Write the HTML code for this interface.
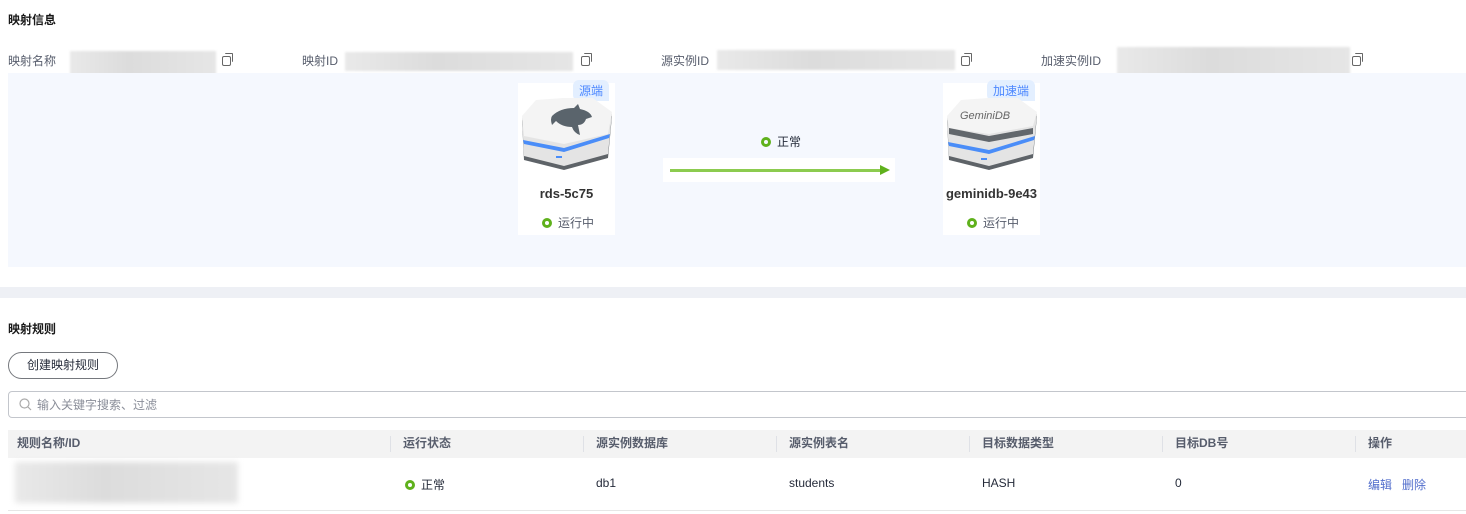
<!DOCTYPE html>
<html><head><meta charset="utf-8"><style>
*{margin:0;padding:0;box-sizing:border-box}
body{width:1466px;height:514px;background:#fff;font-family:"Liberation Sans","Noto Sans CJK SC",sans-serif;font-size:12px;color:#252b3a;position:relative;overflow:hidden}
.a{position:absolute;white-space:nowrap}
.b{font-weight:bold;color:#191919}
.blur{position:absolute;background:linear-gradient(90deg,#e9e9e9,#dcdcdc 40%,#e6e6e6);filter:blur(1px)}
.cp{position:absolute;width:9px;height:10px;border:1.3px solid #666;border-radius:2px}
.cp:after{content:"";position:absolute;left:2px;top:-4px;width:7px;height:8px;border-top:1.3px solid #666;border-right:1.3px solid #666;border-radius:1px}
.dot{display:inline-block;width:10px;height:10px;border:3px solid #5fb11c;border-radius:50%;vertical-align:-1px;margin-right:6px}
.tag{position:absolute;background:#e3efff;color:#4d88ff;font-size:12px;padding:2px 6px;border-radius:6px 6px 0 6px}
.th{position:absolute;top:429px;height:28px;line-height:28px;color:#575d6c;font-weight:bold}
.sep{position:absolute;top:436px;width:1px;height:16px;background:#dfe1e6}
.td{position:absolute;top:476px;color:#252b3a}
</style></head><body>
<div class="a b" style="left:8px;top:11px">映射信息</div>
<div class="a" style="left:8px;top:52px;color:#575d6c">映射名称</div>
<div class="blur" style="left:70px;top:51px;width:146px;height:26px"></div>
<div class="cp" style="left:222px;top:56px"></div>
<div class="a" style="left:302px;top:52px;color:#575d6c">映射ID</div>
<div class="blur" style="left:345px;top:52px;width:228px;height:19px"></div>
<div class="cp" style="left:581px;top:56px"></div>
<div class="a" style="left:661px;top:52px;color:#575d6c">源实例ID</div>
<div class="blur" style="left:717px;top:50px;width:238px;height:20px"></div>
<div class="cp" style="left:961px;top:56px"></div>
<div class="a" style="left:1041px;top:52px;color:#575d6c">加速实例ID</div>
<div class="blur" style="left:1117px;top:47px;width:233px;height:30px"></div>
<div class="cp" style="left:1352px;top:56px"></div>

<div class="a" style="left:8px;top:73px;width:1458px;height:194px;background:#f5f8fe"></div>

<div class="a" style="left:518px;top:83px;width:97px;height:152px;background:#fff"></div>
<div class="tag" style="left:573px;top:80px">源端</div>
<svg class="a" style="left:520px;top:98px" width="92" height="72" viewBox="0 0 92 72">
<polygon points="16,6 70,2 92,18 88,60 44,72 4,62 2,22" fill="#5e6368"/>
<polygon points="16,4 70,0 92,16 88,56 44,68 4,58 2,20" fill="#e4e4e4"/>
<polygon points="16,2 70,-2 92,14 88,36 44,46 4,38 2,18" fill="#f4f4f4"/>
<polygon points="3,42 44,50 90,36 89,40 44,54 4,46" fill="#4a8df8"/>
<rect x="36" y="58" width="6" height="2" fill="#4a8df8"/>
<path d="M32 18 q8-8 22-8 l4-4 2 5 q10 2 12 8 l-6 2 q-2 6-8 6 l2 10 q-6-2-8-8 q-10 0-16-6 l-4 4 q-2-6 0-9z" fill="#5a646c"/>
</svg>
<div class="a b" style="left:518px;top:186px;width:97px;text-align:center;font-size:13px;color:#333">rds-5c75</div>
<div class="a" style="left:542px;top:214px;color:#575d6c"><span class="dot"></span>运行中</div>

<div class="a" style="left:761px;top:133px"><span class="dot"></span>正常</div>
<div class="a" style="left:663px;top:158px;width:232px;height:24px;background:#fff"></div>
<div class="a" style="left:670px;top:169px;width:212px;height:3px;background:#8ccb4f"></div>
<div class="a" style="left:880px;top:165px;width:0;height:0;border-left:10px solid #5fb11c;border-top:5px solid transparent;border-bottom:5px solid transparent"></div>

<div class="a" style="left:943px;top:83px;width:97px;height:152px;background:#fff"></div>
<div class="tag" style="left:987px;top:80px">加速端</div>
<svg class="a" style="left:945px;top:98px" width="92" height="72" viewBox="0 0 92 72">
<polygon points="16,6 70,2 92,18 88,60 44,72 4,62 2,22" fill="#5e6368"/>
<polygon points="16,4 70,0 92,16 88,56 44,68 4,58 2,20" fill="#e4e4e4"/>
<polygon points="16,2 70,-2 92,14 88,28 44,36 4,30 2,18" fill="#f4f4f4"/>
<polygon points="4,30 44,38 88,30 88,36 44,44 4,36" fill="#62676c"/>
<polygon points="3,44 44,52 90,38 89,42 44,56 4,48" fill="#4a8df8"/>
<rect x="36" y="60" width="6" height="2" fill="#4a8df8"/>
<text x="15" y="21" font-size="11" font-style="italic" fill="#666" font-family="Liberation Sans">GeminiDB</text>
</svg>
<div class="a b" style="left:943px;top:186px;width:97px;text-align:center;font-size:13px;color:#333">geminidb-9e43</div>
<div class="a" style="left:967px;top:214px;color:#575d6c"><span class="dot"></span>运行中</div>

<div class="a" style="left:0;top:287px;width:1466px;height:11px;background:#eef0f5"></div>

<div class="a b" style="left:8px;top:320px">映射规则</div>
<div class="a" style="left:8px;top:352px;width:110px;height:27px;border:1px solid #75787d;border-radius:14px;text-align:center;line-height:25px;color:#252b3a">创建映射规则</div>
<div class="a" style="left:8px;top:391px;width:1470px;height:27px;border:1px solid #c3c6cc;border-radius:4px"></div>
<svg class="a" style="left:19px;top:398px" width="13" height="13"><circle cx="5.5" cy="5.5" r="4.5" fill="none" stroke="#aaa" stroke-width="1.2"/><line x1="9" y1="9" x2="12" y2="12" stroke="#aaa" stroke-width="1.2"/></svg>
<div class="a" style="left:37px;top:396px;color:#8a8e99">输入关键字搜索、过滤</div>

<div class="a" style="left:8px;top:430px;width:1458px;height:28px;background:#f3f3f3"></div>
<div class="th" style="left:17px">规则名称/ID</div>
<div class="sep" style="left:390px"></div><div class="th" style="left:403px">运行状态</div>
<div class="sep" style="left:583px"></div><div class="th" style="left:596px">源实例数据库</div>
<div class="sep" style="left:776px"></div><div class="th" style="left:789px">源实例表名</div>
<div class="sep" style="left:969px"></div><div class="th" style="left:982px">目标数据类型</div>
<div class="sep" style="left:1162px"></div><div class="th" style="left:1175px">目标DB号</div>
<div class="sep" style="left:1355px"></div><div class="th" style="left:1368px">操作</div>

<div class="blur" style="left:15px;top:462px;width:223px;height:41px;filter:blur(3px)"></div>
<div class="td" style="left:405px"><span class="dot"></span>正常</div>
<div class="td" style="left:596px">db1</div>
<div class="td" style="left:789px">students</div>
<div class="td" style="left:982px">HASH</div>
<div class="td" style="left:1175px">0</div>
<div class="td" style="left:1368px;color:#526ecc">编辑 &nbsp;&nbsp;删除</div>
<div class="a" style="left:8px;top:510px;width:1458px;height:1px;background:#e6e6e6"></div>
</body></html>
